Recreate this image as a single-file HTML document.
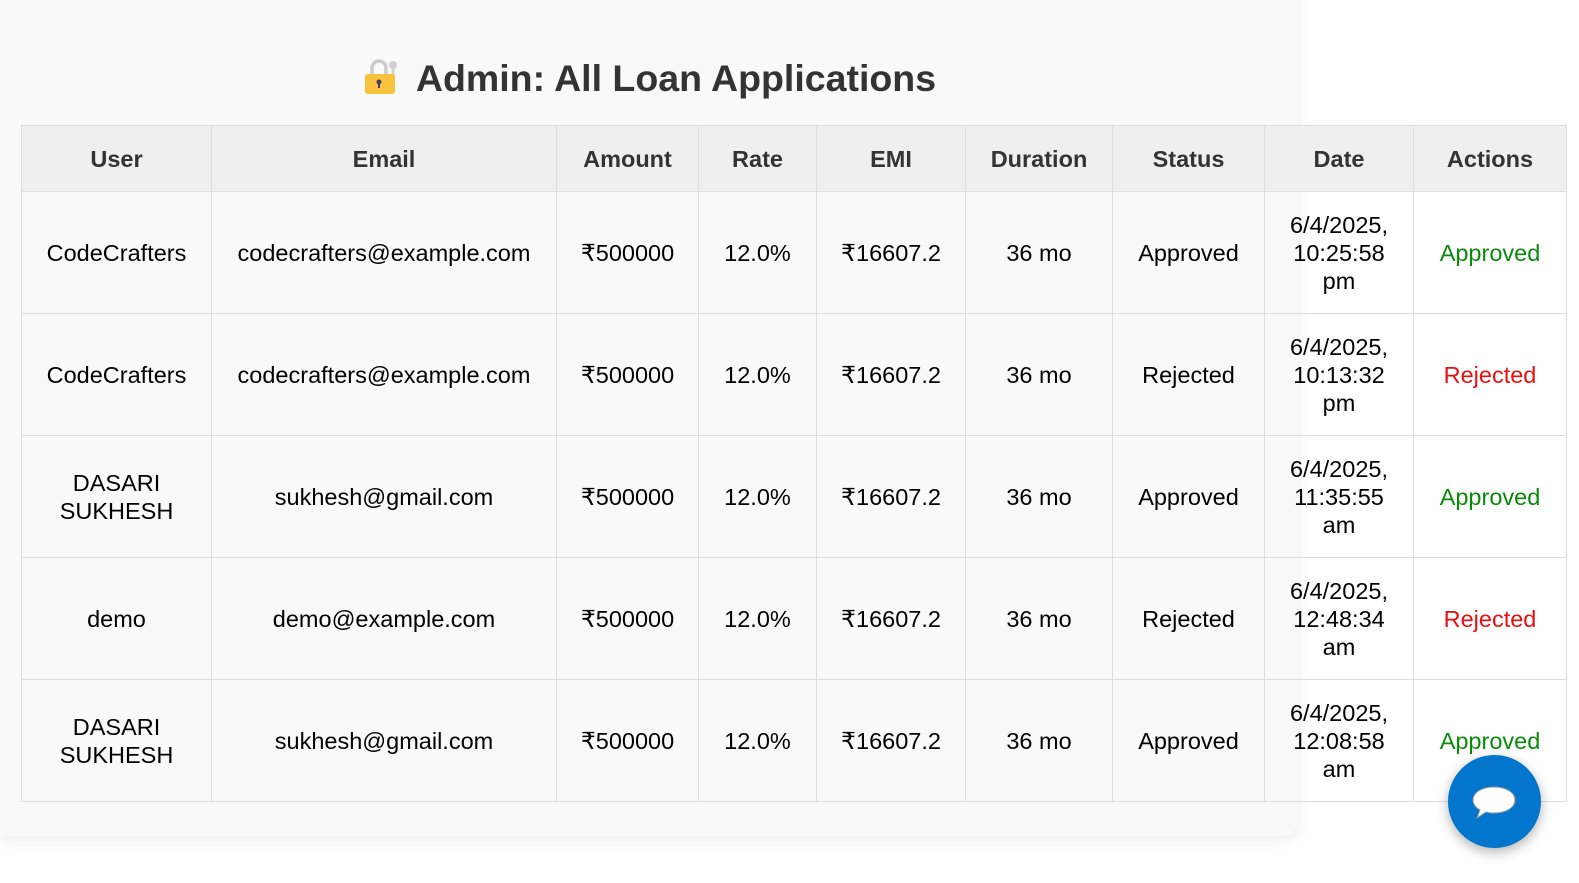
<!DOCTYPE html>
<html><head><meta charset="utf-8"><style>
html,body{margin:0;padding:0;background:#fff;width:1579px;height:883px;overflow:hidden;font-family:"Liberation Sans",Arial,sans-serif;}
.card{position:absolute;left:0;top:-20px;width:1298px;height:856px;background:#f9f9f9;border-radius:0 0 14px 0;box-shadow:0 4px 14px rgba(0,0,0,0.08);}
h2{position:absolute;left:0;top:56px;width:1298px;margin:0;text-align:center;font-size:37.5px;font-weight:bold;color:#333;line-height:44px;}
table{position:absolute;left:21px;top:125px;border-collapse:collapse;table-layout:fixed;width:1545px;}
th,td{border:1px solid #ddd;text-align:center;font-size:23.5px;line-height:28px;padding:0 6px;color:#000;}
th{background:#efefef;color:#333;height:65px;font-weight:bold;}
td{height:121px;}
.ap{color:#0a8a0a}.rj{color:#e81010}
.chat{position:absolute;left:1448px;top:755px;width:93px;height:93px;border-radius:50%;background:#0275cc;box-shadow:0 4px 12px rgba(0,0,0,0.3);}
</style></head><body>
<div class="card"></div>
<h2><svg width="40" height="40" viewBox="0 0 40 40" style="vertical-align:-5px;margin-right:14px"><path d="M10 20 V12 a7 7 0 0 1 14 0 V20" fill="none" stroke="#ccc" stroke-width="3.5"/><circle cx="31" cy="9" r="4" fill="#d0d0d0"/><rect x="29.5" y="11" width="3" height="18" fill="#d0d0d0"/><rect x="3" y="18" width="30" height="20" rx="3" fill="#f9c23c"/><circle cx="17" cy="26" r="2.5" fill="#433b6b"/><rect x="16" y="26" width="2" height="6" fill="#433b6b"/></svg>Admin: All Loan Applications</h2>
<table>
<colgroup><col style="width:190px"><col style="width:345px"><col style="width:142px"><col style="width:118px"><col style="width:149px"><col style="width:147px"><col style="width:152px"><col style="width:149px"><col style="width:153px"></colgroup>
<tr><th>User</th><th>Email</th><th>Amount</th><th>Rate</th><th>EMI</th><th>Duration</th><th>Status</th><th>Date</th><th>Actions</th></tr>
<tr><td>CodeCrafters</td><td>codecrafters@example.com</td><td>₹500000</td><td>12.0%</td><td>₹16607.2</td><td>36 mo</td><td>Approved</td><td>6/4/2025,<br>10:25:58<br>pm</td><td class="ap">Approved</td></tr>
<tr><td>CodeCrafters</td><td>codecrafters@example.com</td><td>₹500000</td><td>12.0%</td><td>₹16607.2</td><td>36 mo</td><td>Rejected</td><td>6/4/2025,<br>10:13:32<br>pm</td><td class="rj">Rejected</td></tr>
<tr><td>DASARI<br>SUKHESH</td><td>sukhesh@gmail.com</td><td>₹500000</td><td>12.0%</td><td>₹16607.2</td><td>36 mo</td><td>Approved</td><td>6/4/2025,<br>11:35:55<br>am</td><td class="ap">Approved</td></tr>
<tr><td>demo</td><td>demo@example.com</td><td>₹500000</td><td>12.0%</td><td>₹16607.2</td><td>36 mo</td><td>Rejected</td><td>6/4/2025,<br>12:48:34<br>am</td><td class="rj">Rejected</td></tr>
<tr><td>DASARI<br>SUKHESH</td><td>sukhesh@gmail.com</td><td>₹500000</td><td>12.0%</td><td>₹16607.2</td><td>36 mo</td><td>Approved</td><td>6/4/2025,<br>12:08:58<br>am</td><td class="ap">Approved</td></tr>
</table>
<div class="chat"><svg width="93" height="93" viewBox="0 0 93 93"><path d="M46 32 c-13 0 -21 6 -21 13 c0 4 3 8 7 10 l-3 8 l9 -6 c3 1 5 1 8 1 c13 0 21 -6 21 -13 s-8 -13 -21 -13z" fill="#fff" stroke="#999" stroke-width="1"/></svg></div>
</body></html>
